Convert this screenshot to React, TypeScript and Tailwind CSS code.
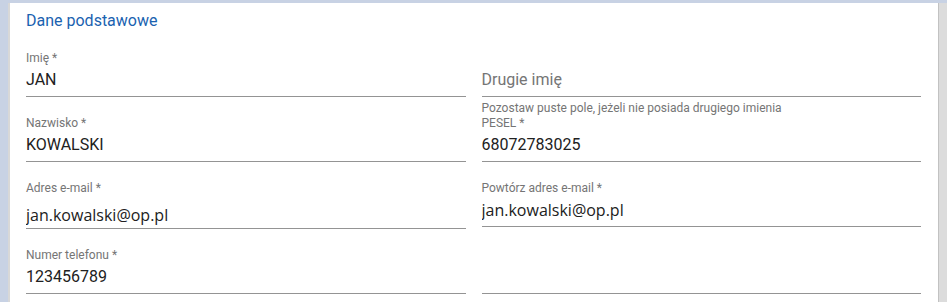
import React from 'react';

interface FieldProps {
  label?: string;
  value?: string;
  placeholder?: string;
  helper?: string;
  email?: boolean;
  shifted?: boolean;
}

const Field: React.FC<FieldProps> = ({ label, value, placeholder, helper, email, shifted }) => (
  <div className="flex flex-col">
    <label className="h-4 text-[12px] leading-4 text-[#757575]">{label}</label>
    <div className={`mt-[2px] border-b border-[#949494] ${shifted ? 'pt-[5px] pb-[1px]' : 'pb-1'}`}>
      <input
        readOnly
        defaultValue={value}
        placeholder={placeholder}
        className={`block h-6 w-full bg-transparent text-[16px] leading-6 text-[#212121] outline-none placeholder:text-[#757575] ${
          email ? "font-['Open_Sans']" : ''
        }`}
      />
    </div>
    <div className="h-[18px]">
      {helper && <p className="pt-[4px] text-[12px] leading-[14px] text-[#757575]">{helper}</p>}
    </div>
  </div>
);

export default function App() {
  return (
    <div className="flex h-[302px] w-[947px] bg-[#c8d2e4] pt-[3px] pl-[8px] font-['Roboto',sans-serif]">
      <div className="flex-1 border-l-2 border-[#d8d8d8] bg-white pt-[6px] pl-4 pr-[17px]">
        <h2 className="mb-[17px] text-[16px] leading-6 text-[#1a62b0]">Dane podstawowe</h2>
        <div className="grid grid-cols-2 gap-x-4">
          <Field label="Imię *" value="JAN" />
          <Field placeholder="Drugie imię" helper="Pozostaw puste pole, jeżeli nie posiada drugiego imienia" />
          <Field label="Nazwisko *" value="KOWALSKI" />
          <Field label="PESEL *" value="68072783025" />
          <Field label="Adres e-mail *" value="jan.kowalski@op.pl" email shifted />
          <Field label="Powtórz adres e-mail *" value="jan.kowalski@op.pl" email />
          <Field label="Numer telefonu *" value="123456789" />
          <Field />
        </div>
      </div>
      <div className="w-[9px] border-l border-[#c2c2c2] bg-[#dcdcdc]" />
    </div>
  );
}
